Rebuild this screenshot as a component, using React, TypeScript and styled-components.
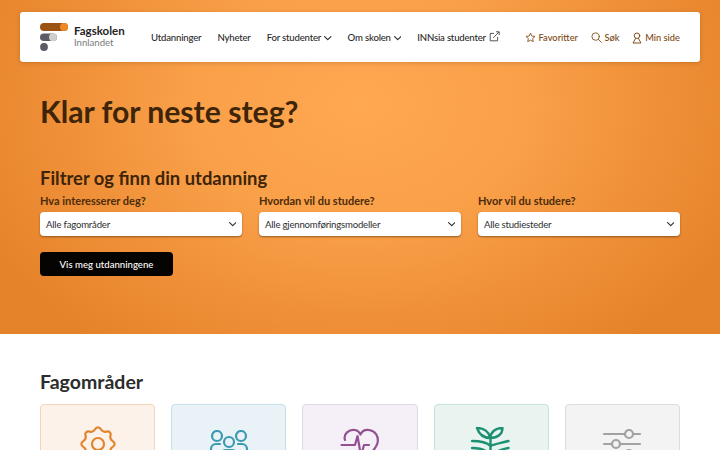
import React from "react";
import styled, { createGlobalStyle } from "styled-components";

const Global = createGlobalStyle`
  html, body { margin: 0; padding: 0; background: #fff; overflow: hidden; }
  body { font-family: "Lato", "Liberation Sans", sans-serif; color: #3a2410; }
  * { box-sizing: border-box; }
`;

const Page = styled.div`
  width: 720px;
  height: 450px;
  overflow: hidden;
`;
const Hero = styled.section`
  height: 334px;
  padding: 12px 20px 0;
  background: radial-gradient(ellipse 420px 300px at 360px 105px, #ffa851 0%, #f9a049 40%, #ee8e36 75%, #e5832a 100%);
`;
const Header = styled.header`
  height: 50px;
  background: #fff;
  border-radius: 3px;
  box-shadow: 0 1px 4px rgba(90, 50, 10, 0.25);
  display: flex;
  align-items: center;
  padding: 0 20px;
`;
const Brand = styled.a`
  display: flex;
  align-items: center;
  gap: 6px;
  width: 111px;
  flex: none;
`;
const BrandText = styled.div`
  display: flex;
  flex-direction: column;
  line-height: 12px;
  font-size: 11.5px;
`;
const BrandName = styled.span`
  color: #232323;
  font-weight: 700;
`;
const BrandSub = styled.span`
  color: #7a7a7a;
  font-size: 9.6px;
`;
const Nav = styled.nav`
  display: flex;
  align-items: center;
  gap: 16px;
  flex: 1;
  padding-top: 1px;
`;
const NavItem = styled.a`
  display: inline-flex;
  align-items: center;
  gap: 3px;
  font-size: 9.6px;
  letter-spacing: -0.2px;
  font-weight: 500;
  color: #2b2b2b;
  white-space: nowrap;
`;
const Tools = styled.div`
  display: flex;
  align-items: center;
  gap: 12.5px;
  padding-top: 1px;
`;
const Tool = styled.a`
  display: inline-flex;
  align-items: center;
  gap: 3px;
  font-size: 9.3px;
  font-weight: 500;
  color: #7d4711;
  white-space: nowrap;
`;
const Main = styled.div`
  padding: 0 20px;
`;
const Title = styled.h1`
  margin: 29px 0 0;
  font-size: 30.2px;
  line-height: 40px;
  font-weight: 700;
  color: #3e2408;
`;
const SubTitle = styled.h2`
  margin: 35px 0 0;
  font-size: 18.4px;
  line-height: 24px;
  font-weight: 700;
  color: #3e2408;
`;
const Filters = styled.div`
  display: grid;
  grid-template-columns: repeat(3, 1fr);
  column-gap: 17px;
  margin-top: 3px;
`;
const Filter = styled.label`
  display: flex;
  flex-direction: column;
  gap: 4px;
`;
const FilterLabel = styled.span`
  font-size: 11px;
  line-height: 15px;
  font-weight: 700;
  color: #4c2c0a;
`;
const SelectBox = styled.div`
  height: 24px;
  background: #fff;
  border-radius: 4px;
  box-shadow: 0 1px 2px rgba(70, 40, 10, 0.55);
  display: flex;
  align-items: center;
  justify-content: space-between;
  padding: 0 6px;
  font-size: 9.6px;
  letter-spacing: -0.2px;
  color: #2f2f2f;
`;
const CTA = styled.button`
  display: block;
  margin-top: 16px;
  width: 133px;
  height: 24px;
  padding: 0;
  border: 0;
  border-radius: 4px;
  background: #060403;
  color: #fff;
  font: 500 9.6px "Lato", sans-serif;
`;
const Section = styled.section`
  padding: 36px 40px 0;
`;
const SectionTitle = styled.h2`
  margin: 0;
  font-size: 19.5px;
  line-height: 24px;
  font-weight: 700;
  color: #2c2c2c;
`;
const Cards = styled.div`
  display: grid;
  grid-template-columns: repeat(5, 1fr);
  gap: 16px;
  margin-top: 10px;
`;
const Card = styled.a<{ $bg: string; $edge: string; $top: number }>`
  height: 120px;
  border-radius: 4px;
  background: ${(p) => p.$bg};
  border: 1px solid ${(p) => p.$edge};
  display: flex;
  justify-content: center;
  padding-top: ${(p) => p.$top}px;
`;

const Chevron = () => (
  <svg width="7.5" height="8" viewBox="1.2 1 7.6 8" fill="none" stroke="currentColor" strokeWidth="1.2" strokeLinecap="round" strokeLinejoin="round">
    <path d="M1.8 3.6 5 6.6l3.2-3" />
  </svg>
);

const Logo = () => (
  <svg width="28" height="28" viewBox="0 0 28 28">
    <rect x="0" y="0" width="28" height="8" rx="4" fill="#9a5312" />
    <circle cx="24" cy="4" r="4" fill="#ee8a22" />
    <rect x="0" y="10.5" width="17" height="7.5" rx="3.75" fill="#5c5c66" />
    <circle cx="13" cy="14.2" r="4" fill="#cfcfcf" />
    <circle cx="4" cy="24" r="3.9" fill="#5c5c66" />
  </svg>
);

const External = () => (
  <svg width="11" height="11" viewBox="0 0 11 11" fill="none" stroke="#444" strokeWidth="0.9" style={{ marginTop: -3 }}>
    <path d="M5 2.4H1.2v7.4h7.4V6" />
    <path d="M4.2 6.8 10 1M7 .8h3.2V4" />
  </svg>
);

const Star = () => (
  <svg width="11" height="11" viewBox="0 0 24 24" fill="none" stroke="#7d4711" strokeWidth="1.8" strokeLinejoin="round">
    <path d="M12 2.5l2.9 6.3 6.9.8-5.1 4.7 1.4 6.8-6.1-3.4-6.1 3.4 1.4-6.8-5.1-4.7 6.9-.8z" />
  </svg>
);
const Search = () => (
  <svg width="11" height="11" viewBox="0 0 24 24" fill="none" stroke="#7d4711" strokeWidth="1.9" strokeLinecap="round">
    <circle cx="10" cy="10" r="8" />
    <path d="M16 16l6.5 6.5" />
  </svg>
);
const User = () => (
  <svg width="10" height="12" viewBox="0 0 20 24" fill="none" stroke="#7d4711" strokeWidth="1.9" strokeLinecap="round" strokeLinejoin="round">
    <circle cx="10" cy="7.5" r="5.5" />
    <path d="M7 13 2 22h16l-5-9" />
  </svg>
);

const polar = (r: number, deg: number) => {
  const a = (deg * Math.PI) / 180;
  return `${(20 + r * Math.cos(a)).toFixed(2)} ${(20 + r * Math.sin(a)).toFixed(2)}`;
};
const gearPath = (() => {
  let d = `M${polar(15, -90 - 11)}`;
  for (let i = 0; i < 8; i++) {
    const a = -90 + i * 45;
    d += `A3.1 3.1 0 0 1 ${polar(15, a + 11)}`;
    d += `A5 5 0 0 0 ${polar(15, a + 34)}`;
  }
  return d + "Z";
})();

const Gear = () => (
  <svg width="40" height="40" viewBox="0 0 40 40" fill="none" stroke="#e2842c" strokeWidth="2.2" strokeLinejoin="round">
    <circle cx="20" cy="20" r="6" />
    <path d={gearPath} />
  </svg>
);
const People = () => (
  <svg width="40" height="40" viewBox="0 0 40 40" fill="none" stroke="#3a9ab2" strokeWidth="2.2" strokeLinecap="round">
    <circle cx="8" cy="6" r="5" />
    <circle cx="32" cy="6" r="5" />
    <circle cx="20" cy="12" r="5" />
    <path d="M2 30V19a5 5 0 0 1 5-5h4M38 30V19a5 5 0 0 0-5-5h-4M12 36V25a5 5 0 0 1 5-5h6a5 5 0 0 1 5 5v11" />
  </svg>
);
const Heart = () => (
  <svg width="40" height="40" viewBox="0 0 40 40" fill="none" stroke="#93528f" strokeWidth="2.2" strokeLinecap="round" strokeLinejoin="round">
    <path d="M5 12C3 6 9 1 15 2c3 .5 4.5 2 5.500 4.500C22 3 25 1.500 29 2c6 .8 10 6 8.500 13-1.500 6-9 13-17 19-3-2-7-5-10-9" />
    <path d="M1.500 17H15l2.500-9 3.500 20 3-11h5" />
  </svg>
);
const Plant = () => (
  <svg width="40" height="40" viewBox="0 0 40 40" fill="none" stroke="#1c9070" strokeWidth="2.4" strokeLinecap="round" strokeLinejoin="round">
    <path d="M19.500 40V11" />
    <path d="M19.500 11C13 11 8 7 6 1c7 0 12 4 13.500 10zM19.500 11c0-6 5-10 12-10 0 6-5 10-12 10z" />
    <path d="M1 14c8 0 14.500 1 18.500 5 4-2 11-3 18-5M1 21c8 0 14.500 2 18.500 7 5-3 11-6 18-7" />
  </svg>
);
const Sliders = () => (
  <svg width="40" height="40" viewBox="0 0 40 40" fill="none" stroke="#a2a2a4" strokeWidth="2.2" strokeLinecap="round">
    <path d="M2 5h21M31 5h7M2 15h8M18 15h20M2 25h21M31 25h7" />
    <circle cx="27" cy="5" r="4" />
    <circle cx="14" cy="15" r="4" />
    <circle cx="27" cy="25" r="4" />
  </svg>
);

const filters = [
  { label: "Hva interesserer deg?", value: "Alle fagområder" },
  { label: "Hvordan vil du studere?", value: "Alle gjennomføringsmodeller" },
  { label: "Hvor vil du studere?", value: "Alle studiesteder" },
];

const cards = [
  { bg: "#fdf2e9", edge: "#f3d5ba", top: 19, icon: <Gear /> },
  { bg: "#e9f3f7", edge: "#c4dfe7", top: 25, icon: <People /> },
  { bg: "#f5f0f8", edge: "#e0d8e4", top: 23, icon: <Heart /> },
  { bg: "#e9f4f1", edge: "#c6e2da", top: 22, icon: <Plant /> },
  { bg: "#f3f3f3", edge: "#dcdcdc", top: 24, icon: <Sliders /> },
];

export default function App() {
  return (
    <Page>
      <Global />
      <Hero>
        <Header>
          <Brand>
            <Logo />
            <BrandText>
              <BrandName>Fagskolen</BrandName>
              <BrandSub>Innlandet</BrandSub>
            </BrandText>
          </Brand>
          <Nav>
            <NavItem>Utdanninger</NavItem>
            <NavItem>Nyheter</NavItem>
            <NavItem>For studenter <Chevron /></NavItem>
            <NavItem>Om skolen <Chevron /></NavItem>
            <NavItem>INNsia studenter <External /></NavItem>
          </Nav>
          <Tools>
            <Tool><Star /> Favoritter</Tool>
            <Tool><Search /> Søk</Tool>
            <Tool><User /> Min side</Tool>
          </Tools>
        </Header>
        <Main>
          <Title>Klar for neste steg?</Title>
          <SubTitle>Filtrer og finn din utdanning</SubTitle>
          <Filters>
            {filters.map((f) => (
              <Filter key={f.label}>
                <FilterLabel>{f.label}</FilterLabel>
                <SelectBox>
                  {f.value}
                  <Chevron />
                </SelectBox>
              </Filter>
            ))}
          </Filters>
          <CTA>Vis meg utdanningene</CTA>
        </Main>
      </Hero>
      <Section>
        <SectionTitle>Fagområder</SectionTitle>
        <Cards>
          {cards.map((c, i) => (
            <Card key={i} $bg={c.bg} $edge={c.edge} $top={c.top}>{c.icon}</Card>
          ))}
        </Cards>
      </Section>
    </Page>
  );
}
